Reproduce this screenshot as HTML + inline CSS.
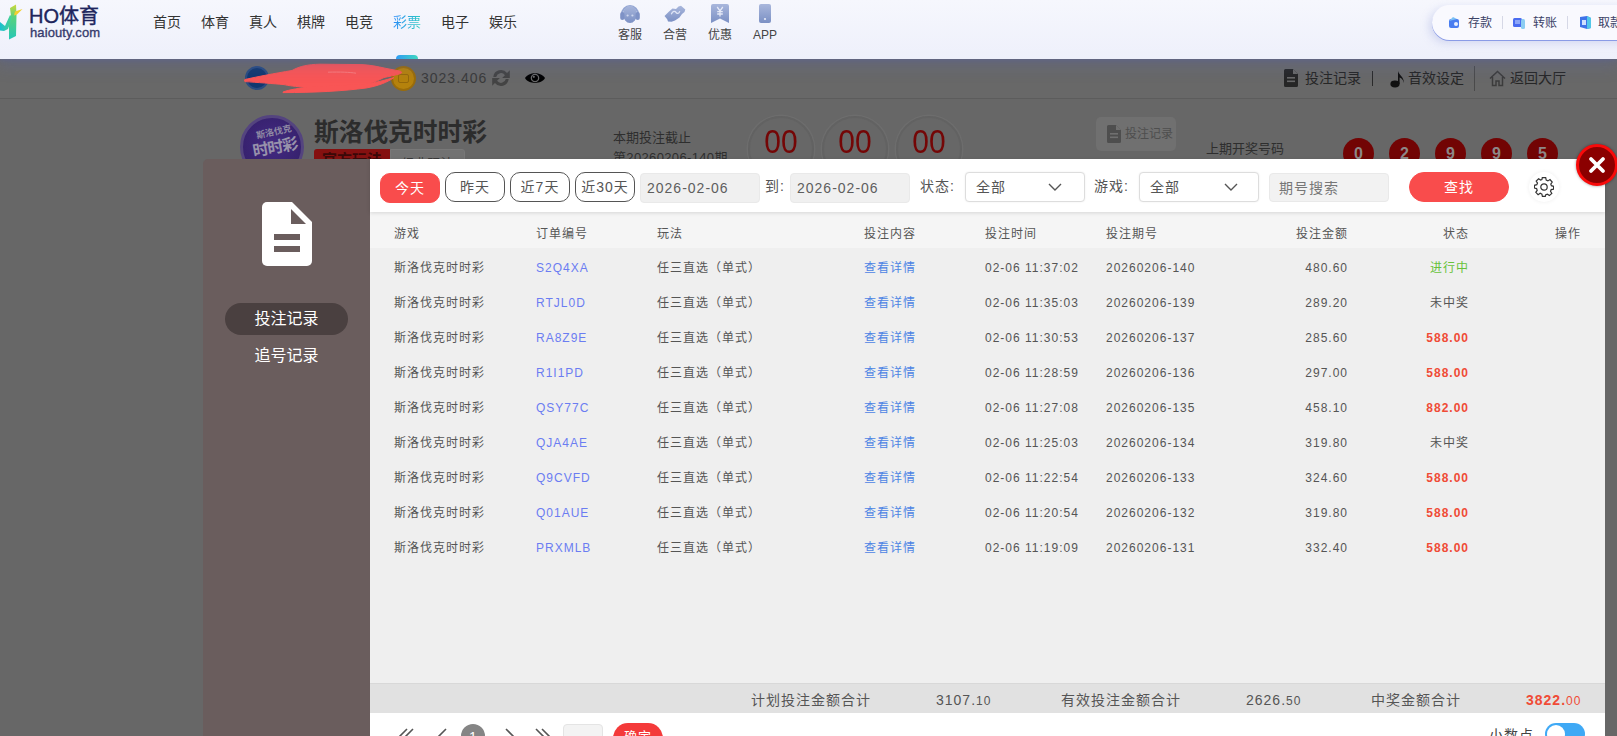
<!DOCTYPE html>
<html lang="zh-CN">
<head>
<meta charset="utf-8">
<title>投注记录</title>
<style>
*{box-sizing:border-box;margin:0;padding:0}
html,body{width:1617px;height:736px;overflow:hidden;background:#676767;font-family:"Liberation Sans","Noto Sans CJK SC",sans-serif;color:#333}
.abs{position:absolute}
#page{position:relative;width:1617px;height:736px;overflow:hidden}
/* ---------- top nav ---------- */
#nav{position:absolute;left:0;top:0;width:1617px;height:59px;background:linear-gradient(#f6f7fd,#eef0fb);box-shadow:0 0 5px 1px rgba(80,95,170,.32),0 4px 16px 2px rgba(90,105,190,.26)}
#nav .line{display:none}
.logo-t{position:absolute;left:29px;top:3px;font-size:20px;line-height:26px;color:#20255c;-webkit-text-stroke:.4px #20255c;white-space:nowrap}
.logo-s{position:absolute;left:30px;top:25px;letter-spacing:.1px;font-size:13px;line-height:16px;color:#363b6c;-webkit-text-stroke:.35px #363b6c;white-space:nowrap}
.menu{position:absolute;top:13px;font-size:14px;line-height:18px;color:#333;white-space:nowrap}
.ico-l{position:absolute;top:28px;width:44px;text-align:center;font-size:12px;line-height:14px;color:#444;white-space:nowrap}
#pill{position:absolute;left:1432px;top:5px;width:220px;height:35px;border-radius:18px;background:#f9f9fe;box-shadow:0 1px 0 #8a9be6,-3px 3px 8px rgba(150,160,220,.35)}
#pill span{position:absolute;top:10px;font-size:12px;line-height:16px;color:#3b4266;white-space:nowrap}
#pill i{position:absolute;top:11px;width:1px;height:13px;background:#d6d8e6}
/* ---------- dimmed page ---------- */
.dim{color:#2e2e2e}
#userrow{position:absolute;left:0;top:58px;width:1617px;height:41px;border-bottom:1px solid #5c5c5c;background:#686868}
.bal{position:absolute;left:421px;top:70px;font-size:14px;line-height:16px;letter-spacing:1px;color:#3a3a3a;white-space:nowrap}
.rlink{position:absolute;top:69px;font-size:14px;line-height:18px;color:#262626;white-space:nowrap}
.title{position:absolute;left:314px;top:115.5px;font-size:24.7px;line-height:34px;font-weight:bold;color:#2c2c2c;white-space:nowrap}
.small{position:absolute;font-size:13px;line-height:16px;color:#2e2e2e;white-space:nowrap}
.cd{position:absolute;top:116px;width:66px;height:66px;border-radius:50%;border:2px solid #626262;box-shadow:0 0 0 1.5px #6d6d6d;text-align:center;font-size:30px;line-height:47px;color:#740606}
.cd b{display:inline-block;font-weight:normal;transform:scaleY(1.08);transform-origin:50% 52%}
.ball{position:absolute;top:138px;width:31px;height:31px;border-radius:50%;background:#720404;color:#8d8787;font-weight:bold;font-size:16px;line-height:31px;text-align:center}
/* ---------- modal ---------- */
#side{position:absolute;left:203px;top:159px;width:167px;height:600px;background:#6a5d5d;border-radius:5px 0 0 0}
#side .act{position:absolute;left:22px;top:144px;width:123px;height:32px;border-radius:16px;background:#4a4040}
#side .t{position:absolute;left:0;width:167px;text-align:center;font-size:16px;line-height:20px;color:#fff;white-space:nowrap}
#main{position:absolute;left:370px;top:159px;width:1235px;height:600px;background:#efefef}
#bar{position:absolute;left:0;top:0;width:1235px;height:53px;background:#fff;box-shadow:0 1px 4px rgba(0,0,0,.13);z-index:2}
.btn{position:absolute;top:13px;width:60px;height:30px;border-radius:10px;border:1px solid #555;font-size:14px;line-height:28px;letter-spacing:1px;text-align:center;color:#555;white-space:nowrap;background:#fff}
.btn.red{background:#f94c4c;border-color:#f94c4c;color:#fff}
.inp{position:absolute;top:14px;width:120px;height:30px;border-radius:4px;background:#f0f0f0;border:1px solid #e9e9e9;font-size:14px;line-height:29px;letter-spacing:1px;color:#5e5e5e;padding-left:6px;white-space:nowrap}
.lab{position:absolute;top:18px;font-size:14px;line-height:18px;letter-spacing:1px;color:#555;white-space:nowrap}
.sel{position:absolute;top:13px;width:120px;height:30px;border-radius:4px;background:#fff;border:1px solid #ddd;box-shadow:0 0 2px rgba(0,0,0,.08);font-size:14px;line-height:28px;letter-spacing:1px;color:#555;padding-left:10px;white-space:nowrap}
#thead{position:absolute;left:0;top:53px;width:1235px;height:36px;background:#f5f5f5}
.row{position:absolute;left:0;width:1235px;height:35px;font-size:12px;line-height:34px;letter-spacing:1px;color:#555;white-space:nowrap}
.row span{position:absolute;top:0}
.c1{left:24px}.c2{left:166px}.c3{left:287px}.c4{left:494px}.c5{left:615px}.c6{left:736px}
.c7{right:257px;text-align:right}.c8{right:136px;text-align:right}.c9{right:24px;text-align:right}
.lk{color:#6b7df2}.lk2{color:#4d84e4}
.win{color:#f04b36;font-weight:bold}.ing{color:#67c23a}
#sum{position:absolute;left:0;top:524px;width:1235px;height:30px;background:#e1e1e1;border-top:1px solid #d8d8d8;font-size:14px;line-height:33px;letter-spacing:1px;color:#555;white-space:nowrap}
#sum span{position:absolute;top:0}
#sum small{font-size:12px;font-weight:normal}
#pager{position:absolute;left:0;top:554px;width:1235px;height:60px;background:#fff}
</style>
</head>
<body>
<div id="page">

<!-- dimmed page -->
<div id="userrow"></div>
<div id="bg">
  <!-- user row -->
  <div class="abs" style="left:245px;top:66px;width:24px;height:24px;border-radius:50%;background:#12386f;border:2px solid #2a4c80"></div>
  <div class="abs" style="left:391px;top:66px;width:25px;height:25px;border-radius:50%;background:#b5820c;border:2px solid #9a6c0a"><div style="position:absolute;left:5px;top:6px;width:11px;height:9px;border-radius:2px;border:1.5px solid #96690a"></div></div>
  <svg class="abs" style="left:244px;top:60px" width="165" height="36" viewBox="0 0 165 36">
    <g fill="#f95555" stroke="#f95555" stroke-width="1" stroke-linejoin="round">
    <path d="M1 19.5 C14 16.5 30 13.5 48 10.5 C56 6 64 4.5 76 4.2 L118 4.6 C126 5 134 6.6 141 8.2 L156.5 11.2 C158 12 158 13 156.5 13.6 C150 15.5 145 16.5 140 17.5 C132 22 122 25 110 26.5 C96 28.4 78 28.6 62 27.4 C52 26.6 44 25.6 40 24.6 C30 23.6 12 22.4 1 21.6 C0 21 0 20 1 19.5 Z"/>
    <path d="M39 32 C46 29.5 56 28 66 27 L122 24 C132 22.6 142 20 150 17.5 C144 22 134 26 122 28 C100 31 70 32.6 39 32.6 Z"/>
    </g>
    <path d="M84 12.2 C96 11.8 106 12.2 112 13.2" stroke="#fb7b7b" stroke-width="1" fill="none"/>
  </svg>
  <div class="bal">3023.406</div>
  <svg class="abs" style="left:490px;top:67px" width="22" height="22" viewBox="0 0 20 20"><path d="M3 9 A7 7 0 0 1 15.5 5.5 L18 3 V10 H11 L13.6 7.4 A4.5 4.5 0 0 0 5.6 9 Z M17 11 A7 7 0 0 1 4.5 14.5 L2 17 V10 H9 L6.4 12.6 A4.5 4.5 0 0 0 14.4 11 Z" fill="#444"/></svg>
  <svg class="abs" style="left:525px;top:71px" width="20" height="14" viewBox="0 0 20 14"><path d="M0 7 C3.5 0.5 16.5 0.5 20 7 C16.5 13.5 3.5 13.5 0 7 Z" fill="#000"/><circle cx="10" cy="7" r="4.3" fill="#686868"/><circle cx="10" cy="7" r="3" fill="#000"/><circle cx="8.8" cy="5.8" r="1.1" fill="#686868"/></svg>
  <!-- right links -->
  <svg class="abs" style="left:1284px;top:69px" width="14" height="18" viewBox="0 0 14 18"><path d="M1.5 0 H9 L14 5 V16.5 A1.5 1.5 0 0 1 12.5 18 H1.5 A1.5 1.5 0 0 1 0 16.5 V1.5 A1.5 1.5 0 0 1 1.5 0 Z" fill="#262626"/><path d="M9 0 V5 H14" fill="#686868"/><rect x="3" y="8" width="8" height="1.6" fill="#686868"/><rect x="3" y="11.5" width="8" height="1.6" fill="#686868"/></svg>
  <div class="rlink" style="left:1305px">投注记录</div>
  <div class="abs" style="left:1372px;top:71px;width:1px;height:15px;background:#2a2a2a"></div>
  <svg class="abs" style="left:1390px;top:70px" width="16" height="18" viewBox="0 0 16 18"><ellipse cx="5" cy="14" rx="4.6" ry="3.4" fill="#111"/><path d="M8 14 V1 C9 5 14 7 14 13 C13 9 11 8 9.6 7.5 V14 Z" fill="#111"/></svg>
  <div class="rlink" style="left:1408px">音效设定</div>
  <div class="abs" style="left:1474px;top:66px;width:1px;height:25px;background:#4a4a4a"></div>
  <svg class="abs" style="left:1489px;top:70px" width="17" height="17" viewBox="0 0 17 17"><path d="M1 8.5 L8.5 1.5 L16 8.5 M3.5 7 V15.5 H7 V11 H10 V15.5 H13.5 V7" stroke="#3c3c3c" stroke-width="1.5" fill="none"/></svg>
  <div class="rlink" style="left:1510px">返回大厅</div>
  <!-- game header -->
  <div class="abs" style="left:240px;top:114.5px;width:64px;height:64px;border-radius:50%;background:radial-gradient(circle at 50% 45%,#432a82,#321e66);border:3px solid #54447f;overflow:hidden">
    <div style="position:absolute;left:6px;top:9px;width:50px;text-align:center;font-size:9px;line-height:11px;color:#8e88a3;font-weight:bold;transform:rotate(-12deg);white-space:nowrap">斯洛伐克</div>
    <div style="position:absolute;left:4px;top:20px;width:56px;text-align:center;font-size:16px;line-height:20px;color:#9892ab;font-weight:bold;transform:rotate(-10deg);white-space:nowrap;letter-spacing:-1px">时时彩</div>
  </div>
  <div class="title">斯洛伐克时时彩</div>
  <div class="abs" style="left:314px;top:149px;width:76px;height:30px;background:#851010;border-radius:3px 0 0 0;color:#3a0808;font-size:15px;font-weight:bold;line-height:21px;text-align:center;overflow:hidden">官方玩法</div>
  <div class="abs" style="left:390px;top:149px;width:75px;height:30px;background:#727272;border:1px solid #787878;border-radius:0 3px 0 0;color:#3a3a3a;font-size:13px;line-height:27px;text-align:center;overflow:hidden">经典玩法</div>
  <div class="small" style="left:613px;top:130px">本期投注截止</div>
  <div class="small" style="left:613px;top:150px;letter-spacing:.35px">第20260206-140期</div>
  <div class="cd" style="left:748px"><b>00</b></div>
  <div class="cd" style="left:822px"><b>00</b></div>
  <div class="cd" style="left:896px"><b>00</b></div>
  <div class="abs" style="left:1096px;top:116.5px;width:80px;height:34px;border-radius:5px;background:#707070"></div>
  <svg class="abs" style="left:1107px;top:125px" width="14" height="18" viewBox="0 0 14 18"><path d="M1.5 0 H9 L14 5 V16.5 A1.5 1.5 0 0 1 12.5 18 H1.5 A1.5 1.5 0 0 1 0 16.5 V1.5 A1.5 1.5 0 0 1 1.5 0 Z" fill="#4e4e4e"/><path d="M9 0 V5 H14" fill="#707070"/><rect x="3" y="8" width="8" height="1.6" fill="#707070"/><rect x="3" y="11.5" width="8" height="1.6" fill="#707070"/></svg>
  <div class="abs" style="left:1125px;top:126px;font-size:12px;line-height:16px;color:#4e4e4e;white-space:nowrap">投注记录</div>
  <div class="small" style="left:1206px;top:141px">上期开奖号码</div>
  <div class="ball" style="left:1343px">0</div>
  <div class="ball" style="left:1389px">2</div>
  <div class="ball" style="left:1435px">9</div>
  <div class="ball" style="left:1481px">9</div>
  <div class="ball" style="left:1527px">5</div>
</div>

<!-- nav -->
<div id="nav">
  <svg class="abs" style="left:0;top:3px" width="24" height="38" viewBox="0 0 24 38">
    <defs><linearGradient id="lg1" x1="0" y1="0" x2="0" y2="1"><stop offset="0" stop-color="#cfd93a"/><stop offset=".35" stop-color="#58d17c"/><stop offset="1" stop-color="#25c7b7"/></linearGradient>
    <linearGradient id="lg2" x1="0" y1="0" x2="1" y2="0"><stop offset="0" stop-color="#19bfd0"/><stop offset="1" stop-color="#4fd58b"/></linearGradient></defs>
    <path d="M10 5 L16 1.5 L16.5 12 L16 33 L9 36.5 L9 22 L11 13 Z" fill="url(#lg1)"/>
    <path d="M15 8.5 L22.5 6 L17 11.5 L14 12.5 Z" fill="#f3cf2e"/>
    <path d="M0 19 L5 23 L10 12 L12.5 14 L8 26 L4 28 L0 27.5 Z" fill="url(#lg2)"/>
  </svg>
  <div class="logo-t">HO体育</div>
  <div class="logo-s">haiouty.com</div>
  <div class="menu" style="left:153px">首页</div>
  <div class="menu" style="left:201px">体育</div>
  <div class="menu" style="left:249px">真人</div>
  <div class="menu" style="left:297px">棋牌</div>
  <div class="menu" style="left:345px">电竞</div>
  <div class="menu" style="left:393px;color:#2a9df0;background:linear-gradient(100deg,#2b8ff5 10%,#2fc9c4 90%);-webkit-background-clip:text;background-clip:text;-webkit-text-fill-color:transparent">彩票</div>
  <div class="menu" style="left:441px">电子</div>
  <div class="menu" style="left:489px">娱乐</div>
  <div class="abs" style="left:396px;top:55px;width:22px;height:4px;border-radius:4px 4px 0 0;background:linear-gradient(90deg,#2f9bf5,#3ed6c0)"></div>
  <!-- icons -->
  <svg class="abs" style="left:619px;top:4px" width="22" height="21" viewBox="0 0 22 21"><defs><linearGradient id="ig" x1="0" y1="0" x2="0" y2="1"><stop offset="0" stop-color="#a9b7dc"/><stop offset="1" stop-color="#7b90c4"/></linearGradient></defs><path d="M3 10 A8 8 0 0 1 19 10" fill="none" stroke="#93a5d2" stroke-width="2"/><ellipse cx="11" cy="10.2" rx="6.8" ry="8.8" fill="url(#ig)"/><rect x="1.2" y="8" width="4.2" height="8" rx="2.1" fill="#7e92c6"/><rect x="16.6" y="8" width="4.2" height="8" rx="2.1" fill="#7e92c6"/><circle cx="8.6" cy="11.5" r="1.1" fill="#cfd7ee"/><circle cx="13.4" cy="11.5" r="1.1" fill="#cfd7ee"/></svg>
  <svg class="abs" style="left:664px;top:5px" width="22" height="18" viewBox="0 0 22 18"><path d="M0.5 11 L5 6.5 L8.5 3.5 L12 4 L14.5 1.5 L17 0.8 L21.3 4.6 L20.5 7 L18 9 L15.5 12.5 L11 15.5 L7.5 16.8 L4 16.5 L3.2 14.2 Z" fill="url(#ig)"/><path d="M7.5 8.8 C8.5 6 11 5.6 12 7.4 C12.8 9 15 8.6 15.6 6.6" stroke="#dfe5f5" stroke-width="1.3" fill="none" stroke-linecap="round"/></svg>
  <svg class="abs" style="left:711px;top:4px" width="18" height="19" viewBox="0 0 18 19"><path d="M2 0 H16 A2 2 0 0 1 18 2 V19 L9 14.5 L0 19 V2 A2 2 0 0 1 2 0 Z" fill="url(#ig)"/><path d="M6.2 3 L9 6.8 L11.8 3 M9 6.8 V12.5 M6.2 7.6 H11.8 M6.2 10 H11.8" stroke="#e6eaf7" stroke-width="1.3" fill="none"/></svg>
  <svg class="abs" style="left:759px;top:4px" width="12" height="19" viewBox="0 0 12 19"><rect x="0" y="0" width="12" height="19" rx="2" fill="url(#ig)"/><circle cx="6" cy="15" r="1.1" fill="#e6eaf7"/></svg>
  <div class="ico-l" style="left:608px">客服</div>
  <div class="ico-l" style="left:653px">合营</div>
  <div class="ico-l" style="left:698px">优惠</div>
  <div class="ico-l" style="left:743px">APP</div>
  <div id="pill">
    <svg class="abs" style="left:16px;top:12px" width="12" height="12" viewBox="0 0 12 12"><rect x="1" y="2" width="10" height="9" rx="2" fill="#4a7df0"/><path d="M1 4 L5 0 L9 2 Z" fill="#7cc0f5"/><circle cx="8" cy="7" r="2" fill="#e9f0ff"/></svg>
    <span style="left:36px">存款</span><i style="left:70px"></i>
    <svg class="abs" style="left:81px;top:12px" width="13" height="12" viewBox="0 0 13 12"><rect x="0" y="1" width="9" height="9" rx="1.5" fill="#4a6cf0"/><rect x="8" y="2" width="4" height="10" rx="1.5" fill="#8ccdf2"/><path d="M2 4 H7 M2 6 H7" stroke="#cfe0ff" stroke-width="1"/></svg>
    <span style="left:101px">转账</span><i style="left:135px"></i>
    <svg class="abs" style="left:148px;top:11px" width="12" height="13" viewBox="0 0 12 13"><path d="M0 1 L7 0 L11 2 V12 L7 13 L0 11 Z" fill="#3f73e8"/><path d="M7 0 L11 2 V12 L7 13 Z" fill="#52c7e8"/><rect x="2" y="4" width="4" height="5" fill="#cfe0ff"/></svg>
    <span style="left:166px">取款</span>
  </div>
  <div class="line"></div>
</div>

<!-- modal -->
<div id="side">
  <svg class="abs" style="left:59px;top:43px" width="50" height="64" viewBox="0 0 50 64"><path d="M5 0 H30 L50 20 V59 A5 5 0 0 1 45 64 H5 A5 5 0 0 1 0 59 V5 A5 5 0 0 1 5 0 Z" fill="#fff"/><path d="M29 7 V22 H44 Z" fill="#6a5d5d"/><rect x="12" y="32" width="26" height="6" fill="#6a5d5d"/><rect x="12" y="44" width="26" height="6" fill="#6a5d5d"/></svg>
  <div class="act"></div>
  <div class="t" style="top:150px">投注记录</div>
  <div class="t" style="top:187px">追号记录</div>
</div>
<div id="main">
  <div id="bar">
    <div class="btn red" style="left:10px;top:14px">今天</div>
    <div class="btn" style="left:75px">昨天</div>
    <div class="btn" style="left:140px">近7天</div>
    <div class="btn" style="left:205px">近30天</div>
    <div class="inp" style="left:270px">2026-02-06</div>
    <div class="lab" style="left:395px">到:</div>
    <div class="inp" style="left:420px">2026-02-06</div>
    <div class="lab" style="left:550px">状态:</div>
    <div class="sel" style="left:595px">全部<svg class="abs" style="left:82px;top:10px" width="14" height="8" viewBox="0 0 14 8"><path d="M1 1 L7 7 L13 1" stroke="#555" stroke-width="1.4" fill="none"/></svg></div>
    <div class="lab" style="left:724px">游戏:</div>
    <div class="sel" style="left:769px">全部<svg class="abs" style="left:84px;top:10px" width="14" height="8" viewBox="0 0 14 8"><path d="M1 1 L7 7 L13 1" stroke="#555" stroke-width="1.4" fill="none"/></svg></div>
    <div class="inp" style="left:899px;top:13.5px;height:29px;line-height:28px;padding-left:9px;color:#777;background:#f2f2f2">期号搜索</div>
    <div class="btn red" style="left:1039px;width:100px;border-radius:15px">查找</div>
    <div class="abs" style="left:1159px;top:13px;width:30px;height:30px;border-radius:50%;background:#fff;box-shadow:0 0 4px rgba(0,0,0,.07)"></div>
    <svg class="abs" style="left:1164px;top:18px" width="20" height="20" viewBox="0 0 20 20"><g fill="none" stroke="#333" stroke-width="1.2"><circle cx="10" cy="10" r="3.2"/><path d="M8.3 1 H11.7 L12.2 3.4 L13.9 4.2 L16 2.9 L18.2 5.4 L16.8 7.4 L17.4 9 L19.6 9.6 V12.4 L17.2 12.9 L16.5 14.6 L17.8 16.7 L15.4 18.9 L13.4 17.5 L11.8 18.1 L11.3 19.6 H8.4 L7.9 17.4 L6.2 16.6 L4.1 18 L1.8 15.6 L3.2 13.6 L2.6 11.9 L0.4 11.4 V8.6 L2.8 8 L3.5 6.4 L2.2 4.3 L4.6 2 L6.6 3.4 L7.9 2.9 Z" transform="translate(0,-0.3)"/></g></svg>
  </div>
  <div id="thead"><div class="row" style="top:0;height:36px;line-height:44px"><span class="c1">游戏</span><span class="c2">订单编号</span><span class="c3">玩法</span><span class="c4">投注内容</span><span class="c5">投注时间</span><span class="c6">投注期号</span><span class="c7">投注金额</span><span class="c8">状态</span><span class="c9">操作</span></div></div>
  <div id="rows">
    <div class="row" style="top:92px"><span class="c1">斯洛伐克时时彩</span><span class="c2 lk">S2Q4XA</span><span class="c3">任三直选（单式）</span><span class="c4 lk2">查看详情</span><span class="c5">02-06 11:37:02</span><span class="c6">20260206-140</span><span class="c7">480.60</span><span class="c8 ing">进行中</span></div>
    <div class="row" style="top:127px"><span class="c1">斯洛伐克时时彩</span><span class="c2 lk">RTJL0D</span><span class="c3">任三直选（单式）</span><span class="c4 lk2">查看详情</span><span class="c5">02-06 11:35:03</span><span class="c6">20260206-139</span><span class="c7">289.20</span><span class="c8">未中奖</span></div>
    <div class="row" style="top:162px"><span class="c1">斯洛伐克时时彩</span><span class="c2 lk">RA8Z9E</span><span class="c3">任三直选（单式）</span><span class="c4 lk2">查看详情</span><span class="c5">02-06 11:30:53</span><span class="c6">20260206-137</span><span class="c7">285.60</span><span class="c8 win">588.00</span></div>
    <div class="row" style="top:197px"><span class="c1">斯洛伐克时时彩</span><span class="c2 lk">R1I1PD</span><span class="c3">任三直选（单式）</span><span class="c4 lk2">查看详情</span><span class="c5">02-06 11:28:59</span><span class="c6">20260206-136</span><span class="c7">297.00</span><span class="c8 win">588.00</span></div>
    <div class="row" style="top:232px"><span class="c1">斯洛伐克时时彩</span><span class="c2 lk">QSY77C</span><span class="c3">任三直选（单式）</span><span class="c4 lk2">查看详情</span><span class="c5">02-06 11:27:08</span><span class="c6">20260206-135</span><span class="c7">458.10</span><span class="c8 win">882.00</span></div>
    <div class="row" style="top:267px"><span class="c1">斯洛伐克时时彩</span><span class="c2 lk">QJA4AE</span><span class="c3">任三直选（单式）</span><span class="c4 lk2">查看详情</span><span class="c5">02-06 11:25:03</span><span class="c6">20260206-134</span><span class="c7">319.80</span><span class="c8">未中奖</span></div>
    <div class="row" style="top:302px"><span class="c1">斯洛伐克时时彩</span><span class="c2 lk">Q9CVFD</span><span class="c3">任三直选（单式）</span><span class="c4 lk2">查看详情</span><span class="c5">02-06 11:22:54</span><span class="c6">20260206-133</span><span class="c7">324.60</span><span class="c8 win">588.00</span></div>
    <div class="row" style="top:337px"><span class="c1">斯洛伐克时时彩</span><span class="c2 lk">Q01AUE</span><span class="c3">任三直选（单式）</span><span class="c4 lk2">查看详情</span><span class="c5">02-06 11:20:54</span><span class="c6">20260206-132</span><span class="c7">319.80</span><span class="c8 win">588.00</span></div>
    <div class="row" style="top:372px"><span class="c1">斯洛伐克时时彩</span><span class="c2 lk">PRXMLB</span><span class="c3">任三直选（单式）</span><span class="c4 lk2">查看详情</span><span class="c5">02-06 11:19:09</span><span class="c6">20260206-131</span><span class="c7">332.40</span><span class="c8 win">588.00</span></div>
  </div>
  <div id="sum"><span style="left:381px">计划投注金额合计</span><span style="left:566px">3107.<small>10</small></span><span style="left:691px">有效投注金额合计</span><span style="left:876px">2626.<small>50</small></span><span style="left:1001px">中奖金额合计</span><span style="left:1156px" class="win">3822.<small>00</small></span></div>
  <div id="pager">
    <svg class="abs" style="left:26px;top:15px" width="160" height="20" viewBox="0 0 160 20"><g fill="none" stroke="#555" stroke-width="1.6"><path d="M11 1 L3 9 L11 17 M17 1 L9 9 L17 17"/><path d="M50 1 L42 9 L50 17"/><path d="M110 1 L118 9 L110 17"/><path d="M140 1 L148 9 L140 17 M146 1 L154 9 L146 17"/></g></svg>
    <div class="abs" style="left:91px;top:11px;width:24px;height:24px;border-radius:50%;background:#858585;color:#fff;font-size:14px;line-height:27px;text-align:center">1</div>
    <div class="abs" style="left:193px;top:11px;width:40px;height:30px;border-radius:4px;background:#f3f3f3;border:1px solid #e4e4e4"></div>
    <div class="abs" style="left:243px;top:10px;width:50px;height:30px;border-radius:15px;background:#f43a3a;color:#fff;font-size:13px;line-height:27px;text-align:center;letter-spacing:1px">确定</div>
    <div class="abs" style="left:1119px;top:13px;font-size:14px;line-height:18px;letter-spacing:1px;color:#444;white-space:nowrap">小数点</div>
    <div class="abs" style="left:1175px;top:10px;width:40px;height:22px;border-radius:11px;background:#3fa9f5"><div style="position:absolute;left:2px;top:2px;width:18px;height:18px;border-radius:50%;background:#fff"></div></div>
  </div>
</div>
<div id="close" class="abs" style="z-index:5;left:1576px;top:144px;width:42px;height:42px;border-radius:50%;background:#8b0000;border:3.5px solid #f80a0a;box-shadow:0 0 3px rgba(0,0,0,.4)">
  <svg class="abs" style="left:9px;top:9px" width="18" height="18" viewBox="0 0 18 18"><path d="M3 3 L15 15 M15 3 L3 15" stroke="#fff" stroke-width="3.8" stroke-linecap="round"/></svg>
</div>

</div>
</body>
</html>
